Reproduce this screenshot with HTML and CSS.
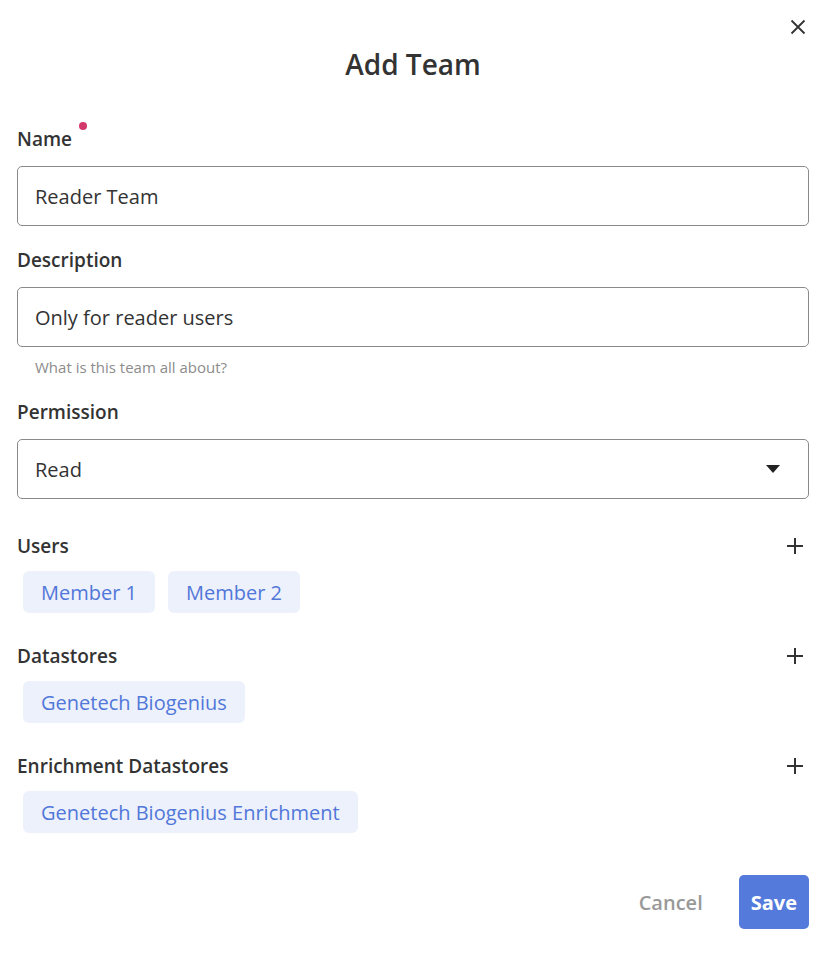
FILE: index.html
```html
<!DOCTYPE html>
<html>
<head>
<meta charset="utf-8">
<link rel="stylesheet" href="styles.css">
</head>
<body>
<div class="modal">
  <button class="close" aria-label="Close">
    <svg width="16" height="16" viewBox="0 0 16 16"><path d="M1.5 1.5 L14.5 14.5 M14.5 1.5 L1.5 14.5" stroke="#333" stroke-width="1.8" fill="none"/></svg>
  </button>
  <h1 class="title">Add Team</h1>

  <div class="field">
    <label class="label">Name<span class="req"></span></label>
    <div class="input">Reader Team</div>
  </div>

  <div class="field">
    <label class="label">Description</label>
    <div class="input">Only for reader users</div>
    <div class="help">What is this team all about?</div>
  </div>

  <div class="field">
    <label class="label">Permission</label>
    <div class="input select">
      <span>Read</span>
      <svg class="caret" width="14" height="8" viewBox="0 0 14 8"><path d="M0 0 H14 L7 8 Z" fill="#222"/></svg>
    </div>
  </div>

  <div class="group">
    <div class="group-head">
      <span class="label">Users</span>
      <svg class="plus" width="18" height="18" viewBox="0 0 18 18"><path d="M9 1 V17 M1 9 H17" stroke="#333" stroke-width="2"/></svg>
    </div>
    <div class="chips">
      <span class="chip">Member 1</span>
      <span class="chip">Member 2</span>
    </div>
  </div>

  <div class="group">
    <div class="group-head">
      <span class="label">Datastores</span>
      <svg class="plus" width="18" height="18" viewBox="0 0 18 18"><path d="M9 1 V17 M1 9 H17" stroke="#333" stroke-width="2"/></svg>
    </div>
    <div class="chips">
      <span class="chip">Genetech Biogenius</span>
    </div>
  </div>

  <div class="group">
    <div class="group-head">
      <span class="label">Enrichment Datastores</span>
      <svg class="plus" width="18" height="18" viewBox="0 0 18 18"><path d="M9 1 V17 M1 9 H17" stroke="#333" stroke-width="2"/></svg>
    </div>
    <div class="chips">
      <span class="chip">Genetech Biogenius Enrichment</span>
    </div>
  </div>

  <div class="actions">
    <button class="btn-cancel">Cancel</button>
    <button class="btn-save">Save</button>
  </div>
</div>
</body>
</html>
```

FILE: styles.css
```css
* { box-sizing: border-box; }
html, body { margin: 0; padding: 0; background: #fff; }
body {
  font-family: "Open Sans", "Noto Sans", sans-serif;
  color: #333;
}
.modal {
  position: relative;
  width: 829px;
  padding: 40px 20px 32px 17px;
}
.close {
  position: absolute;
  top: 19px;
  right: 23px;
  border: 0;
  background: none;
  padding: 0;
  width: 16px;
  height: 16px;
  cursor: pointer;
}
.close svg { display: block; }
.title {
  margin: 0 0 38px;
  text-align: center;
  font-size: 28px;
  font-weight: 600;
  line-height: 48px;
  color: #333;
}
.field { margin-bottom: 21px; }
.label {
  display: block;
  position: relative;
  font-size: 19px;
  font-weight: 600;
  line-height: 26px;
  color: #333;
}
.field .label { display: inline-block; margin-bottom: 14px; }
.req {
  position: absolute;
  right: -15px;
  top: -4px;
  width: 8px;
  height: 8px;
  border-radius: 50%;
  background: #d3386b;
}
.input {
  height: 60px;
  border: 1px solid #8a8a8a;
  border-radius: 5px;
  padding: 0 17px;
  display: flex;
  align-items: center;
  font-size: 20px;
  color: #333;
}
.select { justify-content: space-between; padding-right: 28px; }
.caret { display: block; }
.help {
  margin-top: 9px;
  margin-left: 18px;
  font-size: 15px;
  color: #8c8c8c;
  line-height: 22px;
  margin-bottom: 0;
}
.group { margin-top: 34px; }
.group + .group { margin-top: 30px; }
.group-head {
  display: flex;
  justify-content: space-between;
  align-items: center;
  padding-right: 5px;
  margin-bottom: 12px;
}
.chips {
  display: flex;
  gap: 13px;
  padding-left: 6px;
}
.chip {
  display: inline-flex;
  align-items: center;
  height: 42px;
  padding: 0 18px;
  background: #edf1fb;
  color: #5177d9;
  border-radius: 6px;
  font-size: 20px;
}
.actions {
  display: flex;
  justify-content: flex-end;
  align-items: center;
  gap: 36px;
  margin-top: 42px;
}
.btn-cancel {
  border: 0;
  background: none;
  font-family: inherit;
  font-size: 20px;
  font-weight: 600;
  color: #999;
  padding: 0;
}
.btn-save {
  border: 0;
  background: #547bdc;
  color: #fff;
  font-family: inherit;
  font-size: 20px;
  font-weight: 700;
  height: 54px;
  padding: 0 12px;
  border-radius: 5px;
}
```
